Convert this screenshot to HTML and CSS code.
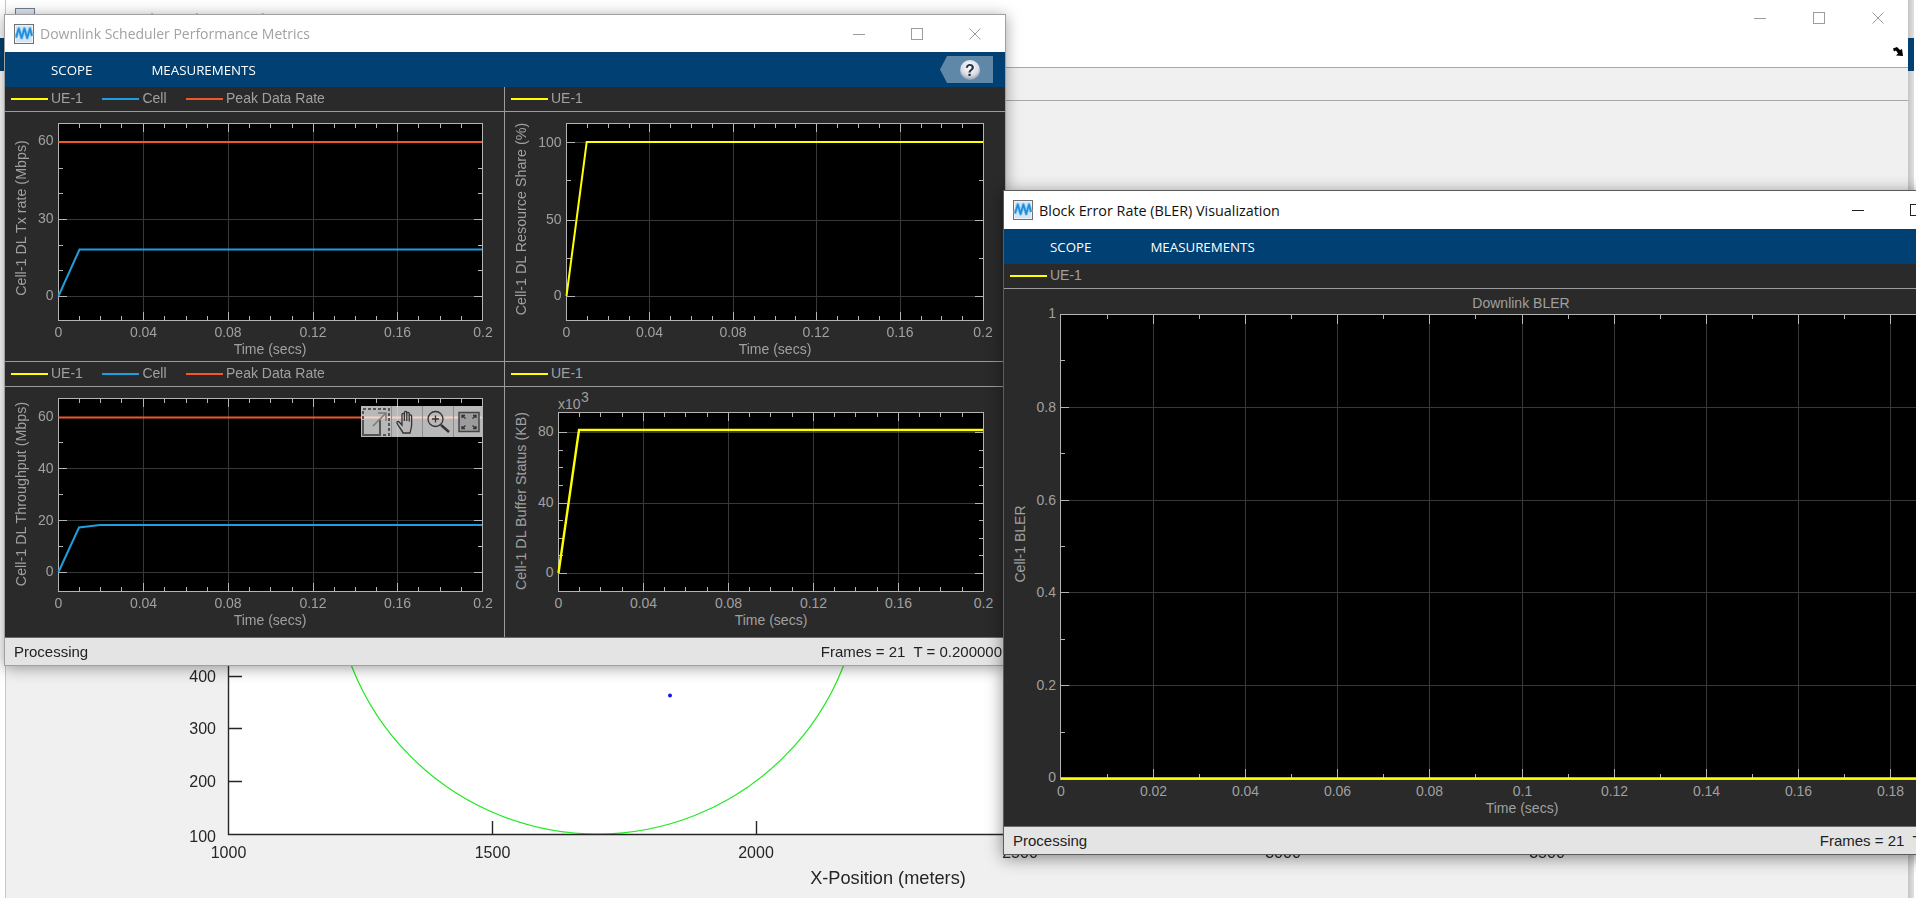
FILE: index.html
```html
<!DOCTYPE html>
<html lang="en">
<head>
<meta charset="utf-8">
<title>Downlink Scheduler Performance Metrics</title>
<link rel="stylesheet" href="styles.css">
</head>
<body>
<svg class="defs" width="0" height="0" aria-hidden="true">
  <defs>
    <path id="xt-ac" d="M79.500 0v4M100.500 0v4M121.500 0v4M143.500 0v8M164.500 0v4M186.500 0v4M207.500 0v4M228.500 0v8M249.500 0v4M270.500 0v4M292.500 0v4M313.500 0v8M334.500 0v4M355.500 0v4M376.500 0v4M397.500 0v8M418.500 0v4M440.500 0v4M461.500 0v4"/>
    <path id="xt-b" d="M587.500 0v4M608.500 0v4M629.500 0v4M649.500 0v8M670.500 0v4M691.500 0v4M712.500 0v4M733.500 0v8M754.500 0v4M775.500 0v4M795.500 0v4M816.500 0v8M837.500 0v4M858.500 0v4M879.500 0v4M900.500 0v8M921.500 0v4M941.500 0v4M962.500 0v4"/>
    <path id="xt-d" d="M579.500 0v4M600.500 0v4M622.500 0v4M643.500 0v8M664.500 0v4M685.500 0v4M707.500 0v4M728.500 0v8M749.500 0v4M770.500 0v4M792.500 0v4M813.500 0v8M834.500 0v4M855.500 0v4M877.500 0v4M898.500 0v8M919.500 0v4M940.500 0v4M962.500 0v4"/>
    <path id="xt-w" d="M1107.500 0v4M1153.500 0v9M1199.500 0v4M1245.500 0v9M1291.500 0v4M1337.500 0v9M1383.500 0v4M1429.500 0v9M1475.500 0v4M1522.500 0v9M1568.500 0v4M1614.500 0v9M1660.500 0v4M1706.500 0v9M1752.500 0v4M1798.500 0v9M1844.500 0v4M1890.500 0v9M1936.500 0v4M1982.500 0v9"/>
    <g id="scope-icon">
      <rect x="0.500" y="0.500" width="19" height="19" class="ic-frame"/>
      <rect x="2" y="2" width="16" height="16" class="ic-fill"/>
      <path d="M2 13.500 4.800 4.500 7.600 14 10.400 4.500 13.200 14 16 4.500 18 12" class="ic-glow"/>
      <path d="M2 13.500 4.800 4.500 7.600 14 10.400 4.500 13.200 14 16 4.500 18 12" class="ic-wave"/>
    </g>
  </defs>
</svg>

<main class="desk">
  <div class="strip-left"></div>
  <div class="strip-right"></div>

  <!-- background figure window -->
  <section class="figure">
    <header class="fig-title">
      <div class="fig-titlebar">
        <svg class="win-icon fig-icon" width="20" height="20" viewBox="0 0 20 20"><rect x="0.500" y="0.500" width="19" height="19" class="fig-ic"/></svg>
        <span class="fig-name">Figure 1: Network Topology Visualization</span>
        <div class="controls fig-controls">
          <span class="ctl"><svg width="12" height="12" viewBox="0 0 12 12"><path d="M0 6.500h12"/></svg></span>
          <span class="ctl"><svg width="12" height="12" viewBox="0 0 12 12"><rect x="0.500" y="0.500" width="11" height="11"/></svg></span>
          <span class="ctl"><svg width="12" height="12" viewBox="0 0 12 12"><path d="M0.500 0.500l11 11M11.500 0.500l-11 11"/></svg></span>
        </div>
      </div>
    </header>
    <div class="fig-toolbar"></div>
    <div class="fig-body">
      <svg class="fig-plot" width="1903" height="798" viewBox="5 100 1903 798">
        <rect x="229" y="200" width="1500" height="633" class="fig-area"/>
        <circle cx="597.500" cy="569" r="264" class="fig-circle"/>
        <circle cx="670" cy="694.500" r="2" class="fig-dot"/>
        <path class="fig-axis" d="M228.500 200V833.500H1729M492.500 833v-13M756.500 833v-13M1020.500 833v-13M1283.500 833v-13M1547.500 833v-13M229 675.500h13M229 727.500h13M229 780.500h13"/>
        <g class="fig-text">
          <text x="216" y="681" text-anchor="end">400</text>
          <text x="216" y="733" text-anchor="end">300</text>
          <text x="216" y="786" text-anchor="end">200</text>
          <text x="216" y="841" text-anchor="end">100</text>
          <text x="228.500" y="857" text-anchor="middle">1000</text>
          <text x="492.500" y="857" text-anchor="middle">1500</text>
          <text x="756" y="857" text-anchor="middle">2000</text>
          <text x="1020" y="857" text-anchor="middle">2500</text>
          <text x="1283" y="857" text-anchor="middle">3000</text>
          <text x="1547" y="857" text-anchor="middle">3500</text>
          <text x="888" y="883" text-anchor="middle" class="fig-xlabel">X-Position (meters)</text>
        </g>
      </svg>
    </div>
  </section>
  <svg class="cursor-mark" width="12" height="10" viewBox="0 0 12 10"><path d="M0 1.500 4 0l3 3 2-1 1 7-7-.5 2-2-2-3-2 1z"/></svg>

  <!-- scheduler metrics scope -->
  <section class="scope scope-metrics">
    <header class="titlebar inactive">
      <svg class="win-icon" width="20" height="20" viewBox="0 0 20 20"><use href="#scope-icon"/></svg>
      <span class="win-name">Downlink Scheduler Performance Metrics</span>
      <div class="controls">
        <span class="ctl"><svg width="12" height="12" viewBox="0 0 12 12"><path d="M0 6.500h12"/></svg></span>
        <span class="ctl"><svg width="12" height="12" viewBox="0 0 12 12"><rect x="0.500" y="0.500" width="11" height="11"/></svg></span>
        <span class="ctl"><svg width="12" height="12" viewBox="0 0 12 12"><path d="M0.500 0.500l11 11M11.500 0.500l-11 11"/></svg></span>
      </div>
    </header>
    <nav class="menubar">
      <span class="menu-item">SCOPE</span>
      <span class="menu-item">MEASUREMENTS</span>
      <span class="help">
        <svg width="53" height="27" viewBox="0 0 53 27">
          <defs>
            <radialGradient id="help-ball" cx="50%" cy="35%" r="70%"><stop offset="0" stop-color="#ffffff"/><stop offset="0.6" stop-color="#d9dfe6"/><stop offset="1" stop-color="#7f90a2"/></radialGradient>
          </defs>
          <path d="M7 0H53V27H7L0 13.500z" class="help-tag"/>
          <circle cx="30" cy="14" r="10" fill="url(#help-ball)"/>
          <text x="30" y="19.500" text-anchor="middle" class="help-q">?</text>
        </svg>
      </span>
    </nav>
    <div class="panels">
      <article class="panel edge-r edge-b">
        <div class="legend">
          <span class="key"><i class="swatch yellow"></i>UE-1</span>
          <span class="key"><i class="swatch blue"></i>Cell</span>
          <span class="key"><i class="swatch orange"></i>Peak Data Rate</span>
        </div>
        <svg class="chart" width="499" height="249" viewBox="5 112 499 249">
          <rect x="58.500" y="123.500" width="424" height="197" class="plot"/>
          <path class="grid" d="M143.500 124V320M228.500 124V320M313.500 124V320M397.500 124V320M59 142.500H482M59 219.500H482M59 296.500H482"/>
          <use href="#xt-ac" y="124" class="tick"/>
          <use href="#xt-ac" class="tick" transform="translate(0 320) scale(1 -1)"/>
          <path class="tick" d="M59 142.500h8M59 168.500h4M59 193.500h4M59 219.500h8M59 245.500h4M59 270.500h4M59 296.500h8M482 142.500h-8M482 168.500h-4M482 193.500h-4M482 219.500h-8M482 245.500h-4M482 270.500h-4M482 296.500h-8"/>
          <rect x="58.500" y="123.500" width="424" height="197" class="frame"/>
          <path class="trace t-orange" d="M58.500 142H482"/>
          <path class="trace t-blue" d="M58.500 296 79.500 249.500H482"/>
          <g class="axis-text">
            <text x="53.500" y="145" text-anchor="end">60</text>
            <text x="53.500" y="223" text-anchor="end">30</text>
            <text x="53.500" y="300" text-anchor="end">0</text>
            <text x="58.500" y="337" text-anchor="middle">0</text>
            <text x="143.500" y="337" text-anchor="middle">0.04</text>
            <text x="228" y="337" text-anchor="middle">0.08</text>
            <text x="313" y="337" text-anchor="middle">0.12</text>
            <text x="397.500" y="337" text-anchor="middle">0.16</text>
            <text x="483" y="337" text-anchor="middle">0.2</text>
            <text x="270" y="354" text-anchor="middle">Time (secs)</text>
            <text x="26" y="218" text-anchor="middle" class="ylab" transform="rotate(-90 26 218)">Cell-1 DL Tx rate (Mbps)</text>
          </g>
        </svg>
      </article>

      <article class="panel edge-b">
        <div class="legend">
          <span class="key"><i class="swatch yellow"></i>UE-1</span>
        </div>
        <svg class="chart" width="500" height="249" viewBox="505 112 500 249">
          <rect x="566.500" y="123.500" width="417" height="197" class="plot"/>
          <path class="grid" d="M649.500 124V320M733.500 124V320M816.500 124V320M900.500 124V320M567 142.500H983M567 220.500H983M567 296.500H983"/>
          <use href="#xt-b" y="124" class="tick"/>
          <use href="#xt-b" class="tick" transform="translate(0 320) scale(1 -1)"/>
          <path class="tick" d="M567 142.500h8M567 180.500h4M567 220.500h8M567 258.500h4M567 296.500h8M983 142.500h-8M983 180.500h-4M983 220.500h-8M983 258.500h-4M983 296.500h-8"/>
          <rect x="566.500" y="123.500" width="417" height="197" class="frame"/>
          <path class="trace t-yellow" d="M566.500 296 586.700 142H983"/>
          <g class="axis-text">
            <text x="561.500" y="146.500" text-anchor="end">100</text>
            <text x="561.500" y="223.500" text-anchor="end">50</text>
            <text x="561.500" y="300" text-anchor="end">0</text>
            <text x="566.500" y="337" text-anchor="middle">0</text>
            <text x="649.500" y="337" text-anchor="middle">0.04</text>
            <text x="733" y="337" text-anchor="middle">0.08</text>
            <text x="816" y="337" text-anchor="middle">0.12</text>
            <text x="900" y="337" text-anchor="middle">0.16</text>
            <text x="983" y="337" text-anchor="middle">0.2</text>
            <text x="775" y="354" text-anchor="middle">Time (secs)</text>
            <text x="526" y="219" text-anchor="middle" class="ylab" transform="rotate(-90 526 219)">Cell-1 DL Resource Share (%)</text>
          </g>
        </svg>
      </article>

      <article class="panel edge-r">
        <div class="legend">
          <span class="key"><i class="swatch yellow"></i>UE-1</span>
          <span class="key"><i class="swatch blue"></i>Cell</span>
          <span class="key"><i class="swatch orange"></i>Peak Data Rate</span>
        </div>
        <svg class="chart" width="499" height="250" viewBox="5 387 499 250">
          <rect x="58.500" y="398.500" width="424" height="193" class="plot"/>
          <path class="grid" d="M143.500 399V591M228.500 399V591M313.500 399V591M397.500 399V591M59 417.500H482M59 468.500H482M59 520.500H482M59 572.500H482"/>
          <use href="#xt-ac" y="399" class="tick"/>
          <use href="#xt-ac" class="tick" transform="translate(0 591) scale(1 -1)"/>
          <path class="tick" d="M59 417.500h8M59 442.500h4M59 468.500h8M59 494.500h4M59 520.500h8M59 546.500h4M59 572.500h8M482 417.500h-8M482 442.500h-4M482 468.500h-8M482 494.500h-4M482 520.500h-8M482 546.500h-4M482 572.500h-8"/>
          <rect x="58.500" y="398.500" width="424" height="193" class="frame"/>
          <path class="trace t-orange" d="M58.500 417.500H482"/>
          <path class="trace t-blue" d="M58.500 572 79 527.500 100 525H482"/>
          <g class="axis-text">
            <text x="53.500" y="421" text-anchor="end">60</text>
            <text x="53.500" y="473" text-anchor="end">40</text>
            <text x="53.500" y="524.500" text-anchor="end">20</text>
            <text x="53.500" y="576" text-anchor="end">0</text>
            <text x="58.500" y="608" text-anchor="middle">0</text>
            <text x="143.500" y="608" text-anchor="middle">0.04</text>
            <text x="228" y="608" text-anchor="middle">0.08</text>
            <text x="313" y="608" text-anchor="middle">0.12</text>
            <text x="397.500" y="608" text-anchor="middle">0.16</text>
            <text x="483" y="608" text-anchor="middle">0.2</text>
            <text x="270" y="625" text-anchor="middle">Time (secs)</text>
            <text x="26" y="494" text-anchor="middle" class="ylab" transform="rotate(-90 26 494)">Cell-1 DL Throughput (Mbps)</text>
          </g>
        </svg>
        <div class="plot-tools">
          <span class="tool"><svg width="30" height="30" viewBox="0 0 30 30"><path class="tool-dash" d="M2 12V2H28V28H20"/><path class="tool-solid" d="M2 13V28H19V13"/><path class="tool-thin" d="M12 19 24 7M17 6H25V14"/></svg></span>
          <span class="tool"><svg width="30" height="30" viewBox="0 0 30 30"><path class="tool-line" d="M11 26c-1-3-5-7-6-10-.4-1.300 1.200-2 2.200-1L10 18V7.500c0-1.600 2.400-1.600 2.400 0V14V5.500c0-1.600 2.400-1.600 2.400 0V14V6.500c0-1.600 2.400-1.600 2.400 0V14.500V9c0-1.600 2.400-1.600 2.400 0v9c0 3-1 5-1.600 8z"/></svg></span>
          <span class="tool"><svg width="30" height="30" viewBox="0 0 30 30"><circle class="tool-line" cx="12.500" cy="12" r="7.500"/><path class="tool-line" d="M9 12h7M12.500 8.500v7"/><path class="tool-heavy" d="M18 18l8 7"/></svg></span>
          <span class="tool"><svg width="30" height="30" viewBox="0 0 30 30"><rect class="tool-box" x="5" y="5.500" width="20" height="19"/><path class="tool-line" d="M8 11V8.500h3M8.500 9l3 2.500M22 11V8.500h-3M21.500 9l-3 2.500M8 19v2.500h3M8.500 21l3-2.500M22 19v2.500h-3M21.500 21l-3-2.500"/></svg></span>
        </div>
      </article>

      <article class="panel">
        <div class="legend">
          <span class="key"><i class="swatch yellow"></i>UE-1</span>
        </div>
        <svg class="chart" width="500" height="250" viewBox="505 387 500 250">
          <rect x="558.500" y="412.500" width="425" height="179" class="plot"/>
          <path class="grid" d="M643.500 413V591M728.500 413V591M813.500 413V591M898.500 413V591M559 432.500H983M559 503.500H983M559 573.500H983"/>
          <use href="#xt-d" y="413" class="tick"/>
          <use href="#xt-d" class="tick" transform="translate(0 591) scale(1 -1)"/>
          <path class="tick" d="M559 432.500h8M559 450.500h4M559 467.500h4M559 485.500h4M559 503.500h8M559 520.500h4M559 538.500h4M559 555.500h4M559 573.500h8M983 432.500h-8M983 450.500h-4M983 467.500h-4M983 485.500h-4M983 503.500h-8M983 520.500h-4M983 538.500h-4M983 555.500h-4M983 573.500h-8"/>
          <rect x="558.500" y="412.500" width="425" height="179" class="frame"/>
          <path class="trace t-yellow t-thick" d="M558.500 573 579 430H983"/>
          <g class="axis-text">
            <text x="558" y="409">x10</text>
            <text x="581" y="402">3</text>
            <text x="553.500" y="436" text-anchor="end">80</text>
            <text x="553.500" y="507" text-anchor="end">40</text>
            <text x="553.500" y="577" text-anchor="end">0</text>
            <text x="558.500" y="608" text-anchor="middle">0</text>
            <text x="643.500" y="608" text-anchor="middle">0.04</text>
            <text x="728.500" y="608" text-anchor="middle">0.08</text>
            <text x="813.500" y="608" text-anchor="middle">0.12</text>
            <text x="898.500" y="608" text-anchor="middle">0.16</text>
            <text x="983.500" y="608" text-anchor="middle">0.2</text>
            <text x="771" y="625" text-anchor="middle">Time (secs)</text>
            <text x="526" y="501" text-anchor="middle" class="ylab" transform="rotate(-90 526 501)">Cell-1 DL Buffer Status (KB)</text>
          </g>
        </svg>
      </article>
    </div>
    <footer class="statusbar">
      <span>Processing</span>
      <span class="frames">Frames = 21  T = 0.200000</span>
    </footer>
  </section>

  <!-- BLER scope -->
  <section class="scope scope-bler">
    <header class="titlebar">
      <svg class="win-icon" width="20" height="20" viewBox="0 0 20 20"><use href="#scope-icon"/></svg>
      <span class="win-name">Block Error Rate (BLER) Visualization</span>
      <div class="controls">
        <span class="ctl"><svg width="12" height="12" viewBox="0 0 12 12"><path d="M0 6.500h12"/></svg></span>
        <span class="ctl"><svg width="12" height="12" viewBox="0 0 12 12"><rect x="0.500" y="0.500" width="11" height="11"/></svg></span>
        <span class="ctl"><svg width="12" height="12" viewBox="0 0 12 12"><path d="M0.500 0.500l11 11M11.500 0.500l-11 11"/></svg></span>
      </div>
    </header>
    <nav class="menubar">
      <span class="menu-item">SCOPE</span>
      <span class="menu-item">MEASUREMENTS</span>
    </nav>
    <div class="panel panel-single">
      <div class="legend">
        <span class="key"><i class="swatch yellow"></i>UE-1</span>
      </div>
      <svg class="chart" width="1000" height="537" viewBox="1004 289 1000 537">
        <rect x="1060.500" y="314.500" width="922" height="465" class="plot"/>
        <path class="grid" d="M1153.500 315V779M1245.500 315V779M1337.500 315V779M1429.500 315V779M1522.500 315V779M1614.500 315V779M1706.500 315V779M1798.500 315V779M1890.500 315V779M1061 407.500H1982M1061 500.500H1982M1061 592.500H1982M1061 685.500H1982"/>
        <use href="#xt-w" y="315" class="tick"/>
        <use href="#xt-w" class="tick" transform="translate(0 778) scale(1 -1)"/>
        <path class="tick" d="M1061 360.500h4M1061 407.500h8M1061 453.500h4M1061 500.500h8M1061 546.500h4M1061 592.500h8M1061 639.500h4M1061 685.500h8M1061 732.500h4"/>
        <rect x="1060.500" y="314.500" width="922" height="465" class="frame"/>
        <path class="trace t-yellow t-flat" d="M1061 778.500H1982"/>
        <g class="axis-text">
          <text x="1521" y="308" text-anchor="middle">Downlink BLER</text>
          <text x="1056" y="318" text-anchor="end">1</text>
          <text x="1056" y="412" text-anchor="end">0.8</text>
          <text x="1056" y="505" text-anchor="end">0.6</text>
          <text x="1056" y="597" text-anchor="end">0.4</text>
          <text x="1056" y="690" text-anchor="end">0.2</text>
          <text x="1056" y="782" text-anchor="end">0</text>
          <text x="1061" y="796" text-anchor="middle">0</text>
          <text x="1153.500" y="796" text-anchor="middle">0.02</text>
          <text x="1245.500" y="796" text-anchor="middle">0.04</text>
          <text x="1337.500" y="796" text-anchor="middle">0.06</text>
          <text x="1429.500" y="796" text-anchor="middle">0.08</text>
          <text x="1522.500" y="796" text-anchor="middle">0.1</text>
          <text x="1614.500" y="796" text-anchor="middle">0.12</text>
          <text x="1706.500" y="796" text-anchor="middle">0.14</text>
          <text x="1798.500" y="796" text-anchor="middle">0.16</text>
          <text x="1890.500" y="796" text-anchor="middle">0.18</text>
          <text x="1522" y="813" text-anchor="middle">Time (secs)</text>
          <text x="1025" y="544" text-anchor="middle" transform="rotate(-90 1025 544)">Cell-1 BLER</text>
        </g>
      </svg>
    </div>
    <footer class="statusbar">
      <span>Processing</span>
      <span class="frames">Frames = 21  T = 0.200000</span>
    </footer>
  </section>
</main>
</body>
</html>
```

FILE: styles.css
```css
* { box-sizing: border-box; }
html, body { margin: 0; padding: 0; background: #fff; overflow: hidden; }
.defs { position: absolute; }

.desk {
  position: relative;
  width: 1916px;
  height: 898px;
  overflow: hidden;
  background: #fff;
  font-family: "Liberation Sans", Arial, sans-serif;
}

/* slivers of the window behind everything */
.strip-left {
  position: absolute; left: 0; top: 38px; width: 5px; height: 33px;
  background: #004072;
}
.strip-right {
  position: absolute; left: 1908px; top: 0; width: 6px; height: 898px;
  background: linear-gradient(to right, #c4c4c4, #e2e2e2);
}
.strip-right::after {
  content: ""; position: absolute; left: 0; top: 38px; width: 6px; height: 33px;
  background: #004072;
}

/* background figure */
.figure {
  position: absolute; left: 5px; top: 0; width: 1903px; height: 898px;
  display: flex; flex-direction: column;
  background: #f0f0f0;
  border-left: 1px solid #c8c8c8;
}
.fig-title { height: 67px; background: #fff; flex: none; }
.fig-titlebar { height: 36px; display: flex; align-items: center; padding-left: 9px; }
.fig-ic { fill: #dfe6ee; stroke: #6f7f8f; }
.fig-name { margin-left: 6px; font: 14.200px "Open Sans", sans-serif; color: #9a9a9a; white-space: nowrap; }
.fig-controls { margin-left: auto; padding-right: 0; }
.fig-controls .ctl { width: 59px; }
.fig-controls .ctl svg { stroke: #9c9c9c; }
.fig-toolbar {
  height: 34px; flex: none;
  border-top: 1px solid #a8a8a8;
  border-bottom: 1px solid #a8a8a8;
}
.fig-body { flex: 1; min-height: 0; }
.fig-plot { display: block; margin-left: -1px; }
.fig-area { fill: #fff; }
.fig-circle { fill: none; stroke: #22e822; stroke-width: 1.200; }
.fig-dot { fill: #1414e6; }
.fig-axis { fill: none; stroke: #262626; stroke-width: 1.400; }
.fig-text text { font-size: 16px; fill: #262626; }
.fig-text .fig-xlabel { font-size: 18.200px; }

.cursor-mark { position: absolute; left: 1893px; top: 47px; fill: #000; }

/* scope windows */
.scope {
  position: absolute;
  display: flex; flex-direction: column;
  background: #2a2a2a;
}
.scope-metrics {
  left: 4px; top: 14px; width: 1002px; height: 652px;
  border: 1px solid #a0a0a0;
  box-shadow: 0 2px 14px rgba(0,0,0,.38);
}
.scope-bler {
  left: 1003px; top: 190px; width: 1002px; height: 665px;
  border: 1px solid #5c5c5c;
  box-shadow: 0 3px 16px rgba(0,0,0,.45);
}

.titlebar {
  flex: none; height: 37px;
  display: flex; align-items: center;
  padding-left: 9px;
  background: #fff;
  color: #111;
}
.scope-bler .titlebar { height: 38px; }
.titlebar.inactive { color: #a2a2a2; }
.win-icon { flex: none; display: block; }
.ic-frame { fill: #eef3f8; stroke: #707070; }
.ic-fill { fill: #d4e6f5; }
.ic-glow { fill: none; stroke: #9ccdf0; stroke-width: 3.500; stroke-linejoin: round; }
.ic-wave { fill: none; stroke: #1f8fdc; stroke-width: 1.800; stroke-linejoin: round; }
.win-name {
  margin-left: 6px;
  font: 14px "Open Sans", sans-serif;
  white-space: nowrap;
}
.scope-bler .win-name { font-size: 14.350px; }
.controls { margin-left: auto; display: flex; padding-right: 1px; }
.ctl { width: 58px; height: 24px; display: flex; align-items: center; justify-content: center; }
.ctl svg { display: block; fill: none; stroke: #222; stroke-width: 1; }
.inactive .ctl svg { stroke: #9c9c9c; }

.menubar {
  flex: none; height: 35px;
  display: flex; align-items: center;
  padding-left: 46px;
  gap: 59px;
  background: #004072;
  color: #fff;
  position: relative;
}
.menu-item { font: 13.300px "Open Sans", sans-serif; white-space: nowrap; }
.help { position: absolute; right: 12px; top: 4px; height: 27px; }
.help svg { display: block; }
.help-tag { fill: #5f87a8; }
.help-q { font: bold 16px "Liberation Sans", sans-serif; fill: #28313f; }

.panels {
  flex: 1; min-height: 0;
  display: grid;
  grid-template-columns: 500px 500px;
  grid-template-rows: 275px 275px;
}
.panel { display: flex; flex-direction: column; position: relative; background: #2a2a2a; min-width: 0; }
.panel-single { flex: 1; min-height: 0; }
.edge-r { border-right: 1px solid #9c9c9c; }
.edge-b { border-bottom: 1px solid #9c9c9c; }

.legend {
  flex: none; height: 25px;
  display: flex; align-items: center; gap: 19.500px;
  padding-left: 6px; padding-bottom: 3px;
  border-bottom: 1px solid #9c9c9c;
  font-size: 14px;
  color: #a0a0a0;
}
.key { display: flex; align-items: center; white-space: nowrap; gap: 3px; }
.swatch { display: block; width: 37px; height: 1.600px; margin-top: 3px; }
.yellow { background: #ffff00; }
.blue { background: #1f9ede; }
.orange { background: #f0582a; }

.chart { display: block; flex: none; }
.plot { fill: #000; }
.grid { fill: none; stroke: #383838; stroke-width: 1; shape-rendering: crispEdges; }
.tick { fill: none; stroke: #b4b4b4; stroke-width: 1; shape-rendering: crispEdges; }
.frame { fill: none; stroke: #b4b4b4; stroke-width: 1; shape-rendering: crispEdges; }
.trace { fill: none; stroke-width: 2; }
.t-orange { stroke: #f0582a; }
.t-blue { stroke: #1f9ede; }
.t-yellow { stroke: #ffff00; }
.t-thick { stroke-width: 2.400; }
.t-flat { stroke-width: 2.500; }
.axis-text text { font-size: 14px; fill: #a0a0a0; }
.axis-text .ylab { font-size: 14.300px; }

.plot-tools {
  position: absolute; left: 356px; top: 44px;
  width: 121px; height: 31px;
  display: flex;
}
.plot-tools::before {
  content: ""; position: absolute; inset: 0;
  background: #b8b8b8;
  mix-blend-mode: screen;
}
.tool { flex: 1; position: relative; display: flex; align-items: center; justify-content: center; border-left: 1px solid #8d8d8d; }
.tool:first-child { border-left: 0; }
.tool svg { display: block; }
.tool-dash { fill: none; stroke: #555; stroke-width: 2; stroke-dasharray: 3 2; }
.tool-solid { fill: none; stroke: #555; stroke-width: 2; }
.tool-thin { fill: none; stroke: #7a7a7a; stroke-width: 1.500; }
.tool-line { fill: none; stroke: #333; stroke-width: 1.300; }
.tool-heavy { fill: none; stroke: #333; stroke-width: 2.400; }
.tool-box { fill: #9c9c9c; stroke: #444; stroke-width: 1.500; }

.statusbar {
  flex: none; height: 28px;
  display: flex; align-items: center; justify-content: space-between;
  padding: 0 3px 0 9px;
  background: #e4e4e4;
  border-top: 1px solid #6a6a6a;
  color: #222;
  font-size: 15px;
}
.frames { white-space: pre; }
```
